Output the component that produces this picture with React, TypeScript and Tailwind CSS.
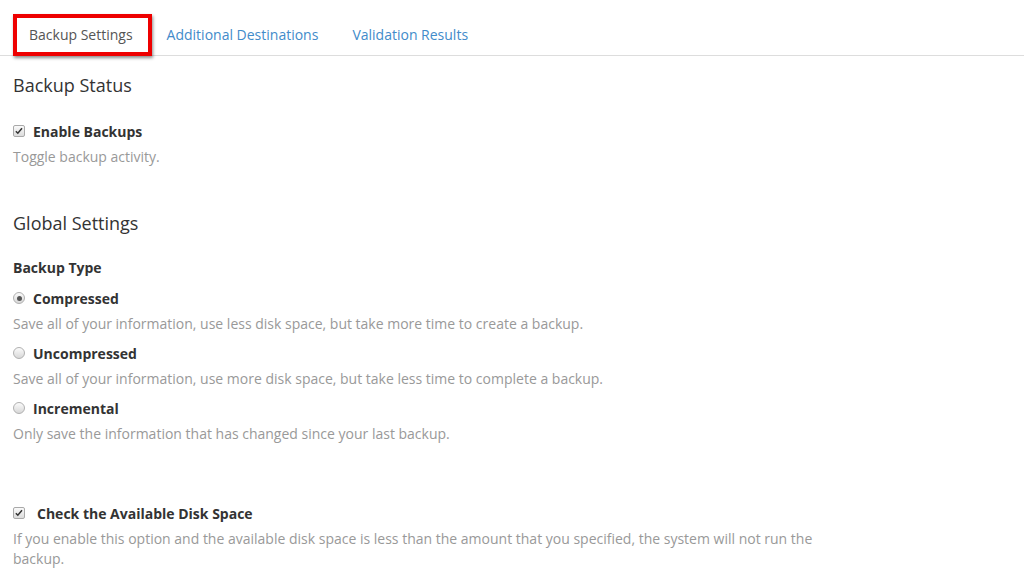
import React from 'react';

function CheckBox() {
  return (
    <span className="inline-flex w-[12px] h-[12px] shrink-0 items-center justify-center rounded-[2px] border border-[#a9a9a9] bg-gradient-to-b from-[#fafafa] to-[#dcdcdc]">
      <svg viewBox="0 0 12 12" className="w-[10px] h-[10px]">
        <path d="M2.2 6.2 L4.6 8.6 L9.6 2.6" fill="none" stroke="#333" strokeWidth="1.8" />
      </svg>
    </span>
  );
}

function Radio({ checked }: { checked?: boolean }) {
  return (
    <span className="inline-flex w-[12px] h-[12px] shrink-0 items-center justify-center rounded-full border border-[#b0b0b0] bg-gradient-to-b from-[#fbfbfb] to-[#d8d8d8]">
      {checked && <span className="w-[5px] h-[5px] rounded-full bg-[#555]" />}
    </span>
  );
}

function Option({ label, desc, checked, mt }: { label: string; desc: string; checked?: boolean; mt: string }) {
  return (
    <>
      <div className={`${mt} flex items-center gap-[8px] h-[20px] font-bold`}>
        <Radio checked={checked} />
        <span>{label}</span>
      </div>
      <p className="mt-[6px] leading-[20px] text-[#999]">{desc}</p>
    </>
  );
}

export default function App() {
  return (
    <div className="w-[1024px] h-[576px] overflow-hidden bg-white text-[14px] text-[#333] font-['Open_Sans',sans-serif]">
      {/* tabs */}
      <div className="h-[56px] border-b border-[#ddd] flex items-end">
        <div className="ml-[13px] -mb-px h-[42px] pl-[12px] pr-[15px] pb-[2px] flex items-center border-4 border-[#ee0000] bg-white text-[#555] shadow-[1px_2px_3px_rgba(0,0,0,0.45)]">
          Backup Settings
        </div>
        <div className="-mb-px h-[42px] pl-[15px] pr-[16px] pb-[2px] flex items-center text-[#428bca]">
          Additional Destinations
        </div>
        <div className="-mb-px ml-[2px] h-[42px] px-[16px] pb-[2px] flex items-center text-[#428bca]">
          Validation Results
        </div>
      </div>

      <div className="px-[13px]">
        <h2 className="mt-[19px] text-[18px] leading-[20px] font-normal">Backup Status</h2>
        <div className="mt-[26px] flex items-center gap-[8px] h-[20px] font-bold">
          <CheckBox />
          <span>Enable Backups</span>
        </div>
        <p className="mt-[6px] leading-[20px] text-[#999]">Toggle backup activity.</p>

        <h2 className="mt-[46px] text-[18px] leading-[20px] font-normal">Global Settings</h2>
        <div className="mt-[25px] h-[20px] leading-[20px] font-bold">Backup Type</div>

        <Option
          mt="mt-[10px]"
          checked
          label="Compressed"
          desc="Save all of your information, use less disk space, but take more time to create a backup."
        />
        <Option
          mt="mt-[9px]"
          label="Uncompressed"
          desc="Save all of your information, use more disk space, but take less time to complete a backup."
        />
        <Option
          mt="mt-[9px]"
          label="Incremental"
          desc="Only save the information that has changed since your last backup."
        />

        <div className="mt-[59px] flex items-center gap-[12px] h-[20px] font-bold">
          <CheckBox />
          <span>Check the Available Disk Space</span>
        </div>
        <p className="mt-[6px] max-w-[820px] leading-[20px] text-[#999]">
          If you enable this option and the available disk space is less than the amount that you specified, the system will not run the backup.
        </p>
      </div>
    </div>
  );
}
